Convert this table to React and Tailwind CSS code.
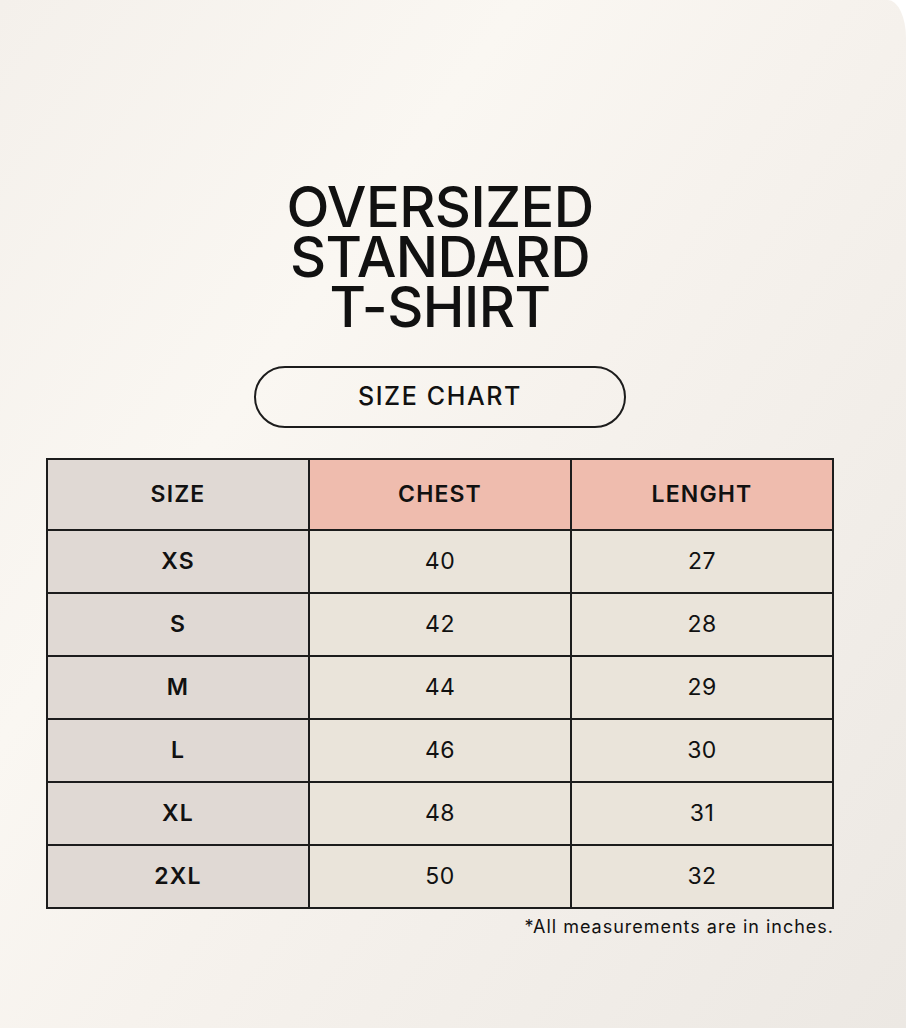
const ROWS = [
  ['XS', 40, 27],
  ['S', 42, 28],
  ['M', 44, 29],
  ['L', 46, 30],
  ['XL', 48, 31],
  ['2XL', 50, 32],
]

const cell = 'border-2 border-[#1c1c1c] text-center text-[23px]'

export default function App() {
  return (
    <div className="w-[906px] h-[1028px] bg-white font-['Inter',sans-serif] text-[#111]">
      <div className="h-full pr-[26px] rounded-tr-[18px_38px] bg-[linear-gradient(125deg,#f4f0eb_0%,#faf7f2_32%,#f6f2ed_52%,#ece8e3_100%)] flex flex-col items-center">
        <h1 className="mt-[182px] text-center text-[56px] leading-[50px] font-medium tracking-[-0.01em]">
          OVERSIZED
          <br />
          STANDARD
          <br />
          T-SHIRT
        </h1>
        <div className="mt-[34px] w-[372px] h-[62px] rounded-full border-2 border-[#1c1c1c] flex items-center justify-center text-[25px] font-medium tracking-[0.065em]">
          SIZE CHART
        </div>
        <div className="mt-[30px] w-[788px]">
          <table className="w-full border-collapse border-2 border-[#1c1c1c] table-fixed">
            <thead>
              <tr className="h-[71px]">
                <th className={`${cell} bg-[#e0d9d4] font-semibold tracking-[0.05em]`}>SIZE</th>
                <th className={`${cell} bg-[#efbcae] font-semibold tracking-[0.05em]`}>CHEST</th>
                <th className={`${cell} bg-[#efbcae] font-semibold tracking-[0.05em]`}>LENGHT</th>
              </tr>
            </thead>
            <tbody>
              {ROWS.map(([s, c, l]) => (
                <tr key={s} className="h-[63px]">
                  <td className={`${cell} bg-[#e0d9d4] font-semibold tracking-[0.05em]`}>{s}</td>
                  <td className={`${cell} bg-[#eae4da] tracking-[0.02em]`}>{c}</td>
                  <td className={`${cell} bg-[#eae4da] tracking-[0.02em]`}>{l}</td>
                </tr>
              ))}
            </tbody>
          </table>
          <p className="mt-[4px] text-right text-[18px] tracking-[0.055em]">*All measurements are in inches.</p>
        </div>
      </div>
    </div>
  )
}
